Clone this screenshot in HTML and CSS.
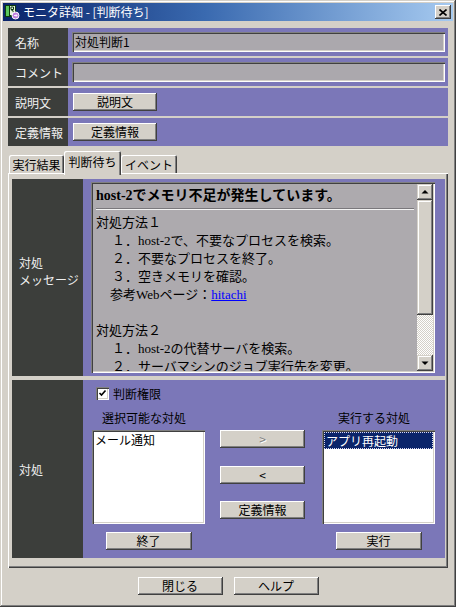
FILE: index.html
```html
<!DOCTYPE html>
<html lang="ja">
<head>
<meta charset="utf-8">
<title>モニタ詳細</title>
<link rel="stylesheet" href="styles.css">
</head>
<body>
<div class="window">
  <div class="titlebar">
    <svg class="app-icon" width="16" height="16" viewBox="0 0 16 16">
      <rect x="1" y="1" width="11" height="12" fill="#0d3d0d"/>
      <rect x="2" y="2" width="3" height="10" fill="#5cc85c"/>
      <rect x="6" y="2" width="5" height="9" fill="#e8f4e0"/>
      <path d="M7 3h2.5v2.5H7zM7 6h1.5l1.5 4" fill="none" stroke="#0d3d0d" stroke-width="1"/>
      <circle cx="11.5" cy="11.5" r="3.5" fill="#c080e0" stroke="#fff" stroke-width="1"/>
      <path d="M10 11.5h3M12 10.3l1 1.2-1 1.2" fill="none" stroke="#fff" stroke-width="0.9"/>
    </svg>
    <span class="title">モニタ詳細 - [判断待ち]</span>
    <button class="close" aria-label="閉じる">
      <svg width="8" height="7" viewBox="0 0 8 7"><path d="M0.5 0.5L7.5 6.5M7.5 0.5L0.5 6.5" stroke="#000" stroke-width="1.6"/></svg>
    </button>
  </div>

  <div class="content">
    <div class="row">
      <div class="lbl">名称</div>
      <div class="val"><div class="field">対処判断1</div></div>
    </div>
    <div class="row">
      <div class="lbl">コメント</div>
      <div class="val"><div class="field"></div></div>
    </div>
    <div class="row">
      <div class="lbl">説明文</div>
      <div class="val val-btn"><button class="btn btn-row">説明文</button></div>
    </div>
    <div class="row">
      <div class="lbl">定義情報</div>
      <div class="val val-btn"><button class="btn btn-row">定義情報</button></div>
    </div>

    <div class="tabs">
      <div class="tab tab-1">実行結果</div>
      <div class="tab tab-2 active">判断待ち</div>
      <div class="tab tab-3">イベント</div>
    </div>

    <div class="panel">
      <div class="sec sec-msg">
        <div class="sec-lbl">対処<br>メッセージ</div>
        <div class="sec-val msg-val">
          <div class="msgbox">
            <div class="msg-text">
              <div class="msg-title">host-2でメモリ不足が発生しています。</div>
              <div class="msg-sep"></div>
              <div class="msg-line">対処方法１</div>
              <div class="msg-line ind">１．host-2で、不要なプロセスを検索。</div>
              <div class="msg-line ind">２．不要なプロセスを終了。</div>
              <div class="msg-line ind">３．空きメモリを確認。</div>
              <div class="msg-line ind2">参考Webページ：<a href="#" class="link">hitachi</a></div>
              <div class="msg-line">&nbsp;</div>
              <div class="msg-line">対処方法２</div>
              <div class="msg-line ind">１．host-2の代替サーバを検索。</div>
              <div class="msg-line ind">２．サーバマシンのジョブ実行先を変更。</div>
            </div>
            <div class="vscroll">
              <div class="sb-btn">
                <svg width="16" height="16" viewBox="0 0 16 16"><path d="M4.5 9.5L8 6l3.5 3.5z" fill="#000"/></svg>
              </div>
              <div class="sb-thumb"></div>
              <div class="sb-track"></div>
              <div class="sb-btn">
                <svg width="16" height="16" viewBox="0 0 16 16"><path d="M4.5 6.5L8 10l3.5-3.5z" fill="#000"/></svg>
              </div>
            </div>
          </div>
        </div>
      </div>

      <div class="sec sec-act">
        <div class="sec-lbl">対処</div>
        <div class="sec-val act-val">
          <label class="chk-row">
            <span class="chk">
              <svg width="9" height="9" viewBox="0 0 9 9"><path d="M1.5 4l2 2 4-4.5" fill="none" stroke="#000" stroke-width="1.6"/></svg>
            </span>
            <span>判断権限</span>
          </label>
          <div class="act-grid">
            <div class="col-title col-title-l">選択可能な対処</div>
            <div></div>
            <div class="col-title col-title-r">実行する対処</div>

            <div class="listbox">
              <div class="item">メール通知</div>
            </div>
            <div class="mid-btns">
              <button class="btn btn-mid disabled">&gt;</button>
              <button class="btn btn-mid">&lt;</button>
              <button class="btn btn-mid">定義情報</button>
            </div>
            <div class="listbox">
              <div class="item selected">アプリ再起動</div>
            </div>

            <div class="under"><button class="btn btn-under">終了</button></div>
            <div></div>
            <div class="under"><button class="btn btn-under">実行</button></div>
          </div>
        </div>
      </div>
    </div>

    <div class="footer">
      <button class="btn btn-foot">閉じる</button>
      <button class="btn btn-foot">ヘルプ</button>
    </div>
  </div>
</div>
</body>
</html>
```

FILE: styles.css
```css
* {
  box-sizing: border-box;
}

html, body {
  margin: 0;
  padding: 0;
  background: #d4d0c8;
  overflow: hidden;
}

body {
  font-family: "Noto Sans CJK JP", "Noto Sans", sans-serif;
  font-size: 12px;
  color: #000;
}

.window {
  width: 456px;
  height: 607px;
  padding: 3px;
  background: #d4d0c8;
  box-shadow:
    inset -1px -1px #404040,
    inset 1px 1px #d4d0c8,
    inset -2px -2px #808080,
    inset 2px 2px #ffffff;
}

/* title bar */
.titlebar {
  height: 18px;
  display: flex;
  align-items: center;
  padding: 0 2px 0 1px;
  background: linear-gradient(90deg, #0a246a 0%, #3a6ab0 45%, #a6caf0 100%);
}

.app-icon {
  flex: none;
  margin-right: 3px;
}

.title {
  color: #fff;
  font-size: 12px;
  line-height: 14px;
  letter-spacing: 0;
  white-space: nowrap;
}

.close {
  margin-left: auto;
  width: 16px;
  height: 14px;
  padding: 0;
  border: 0;
  background: #d4d0c8;
  display: flex;
  align-items: center;
  justify-content: center;
  box-shadow:
    inset -1px -1px #404040,
    inset 1px 1px #fff,
    inset -2px -2px #808080;
}

/* content */
.content {
  padding: 7px 5px 0 5px;
}

.row {
  display: flex;
  height: 28px;
  margin-bottom: 2px;
}

.lbl {
  width: 60px;
  flex: none;
  background: #3c3e3b;
  color: #f0f0f0;
  padding-left: 7px;
  display: flex;
  align-items: center;
  white-space: nowrap;
}

.val {
  flex: 1;
  background: #7b77b8;
  padding: 4px 3px 0 4px;
}

.val-btn {
  padding: 0 0 0 5px;
  display: flex;
  align-items: center;
}

.field {
  height: 20px;
  background: #aba8ad;
  padding: 2px 0 0 3px;
  line-height: 16px;
  box-shadow:
    inset 1px 1px #808080,
    inset 2px 2px #404040,
    inset -1px -1px #fff,
    inset -2px -2px #d4d0c8;
}

/* buttons */
.btn {
  font-family: "Noto Sans CJK JP", "Noto Sans", sans-serif;
  font-size: 12px;
  line-height: 14px;
  color: #000;
  background: #d4d0c8;
  border: 0;
  padding: 0;
  height: 18px;
  box-shadow:
    inset -1px -1px #404040,
    inset 1px 1px #fff,
    inset -2px -2px #808080;
}

.btn-row {
  width: 84px;
}

.btn.disabled {
  color: #808080;
  text-shadow: 1px 1px #fff;
}

/* tabs */
.tabs {
  display: flex;
  align-items: flex-end;
  height: 22px;
  margin-top: 5px;
  padding-left: 1px;
  position: relative;
  z-index: 2;
}

.tab {
  height: 18px;
  display: flex;
  align-items: center;
  justify-content: center;
  background: #d4d0c8;
  border-radius: 2px 2px 0 0;
  box-shadow:
    inset 1px 1px #fff,
    inset -1px 0 #404040,
    inset -2px 0 #808080;
  white-space: nowrap;
}

.tab-1 { width: 55px; }
.tab-2 { width: 57px; }
.tab-3 { width: 56px; }

.tab.active {
  height: 24px;
  margin-bottom: -2px;
  padding-bottom: 4px;
  box-shadow:
    inset 1px 1px #fff,
    inset -1px 0 #404040,
    inset -2px 0 #808080;
}

/* panel */
.panel {
  height: 395px;
  padding: 6px 3px 0 4px;
  background: #d4d0c8;
  box-shadow:
    inset 1px 1px #fff,
    inset -1px -1px #404040,
    inset -2px -2px #808080;
}

.sec {
  display: flex;
}

.sec-msg {
  height: 197px;
  margin-bottom: 4px;
}

.sec-act {
  height: 178px;
}

.sec-lbl {
  width: 71px;
  flex: none;
  background: #3c3e3b;
  color: #f0f0f0;
  padding-left: 7px;
  display: flex;
  align-items: center;
  line-height: 17px;
  padding-bottom: 14px;
}

.sec-act .sec-lbl {
  padding-bottom: 0;
}

.sec-val {
  flex: 1;
  background: #7b77b8;
}

.msg-val {
  padding: 3px 10px 3px 8px;
}

/* message box */
.msgbox {
  height: 100%;
  display: flex;
  background: #adaaae;
  padding: 2px;
  box-shadow:
    inset 1px 1px #808080,
    inset 2px 2px #404040,
    inset -1px -1px #fff,
    inset -2px -2px #d4d0c8;
}

.msg-text {
  flex: 1;
  overflow: hidden;
  padding: 3px 3px 0 3px;
  font-family: "Liberation Serif", "Noto Sans CJK JP", serif;
  color: #000;
}

.msg-title {
  font-size: 14px;
  font-weight: bold;
  line-height: 18px;
  white-space: nowrap;
}

.msg-sep {
  height: 2px;
  margin: 3px 0 4px;
  border-top: 1px solid #7a787c;
  border-bottom: 1px solid #f4f4f4;
}

.msg-line {
  font-size: 13px;
  line-height: 18px;
  white-space: nowrap;
}

.ind {
  padding-left: 16px;
}

.ind2 {
  padding-left: 14px;
}

.link {
  color: #0000ff;
  text-decoration: underline;
}

/* scrollbar */
.vscroll {
  width: 16px;
  flex: none;
  display: flex;
  flex-direction: column;
}

.sb-btn {
  width: 16px;
  height: 16px;
  background: #d4d0c8;
  box-shadow:
    inset -1px -1px #404040,
    inset 1px 1px #d4d0c8,
    inset -2px -2px #808080,
    inset 2px 2px #fff;
}

.sb-btn svg {
  display: block;
}

.sb-thumb {
  height: 115px;
  background: #d4d0c8;
  box-shadow:
    inset -1px -1px #404040,
    inset 1px 1px #d4d0c8,
    inset -2px -2px #808080,
    inset 2px 2px #fff;
}

.sb-track {
  flex: 1;
  background-color: #d4d0c8;
  background-image: repeating-conic-gradient(#ffffff 0 25%, #d4d0c8 0 50%);
  background-size: 2px 2px;
}

/* action section */
.act-val {
  padding: 7px 10px 0 9px;
}

.chk-row {
  display: flex;
  align-items: center;
  height: 13px;
  margin-left: 4px;
  gap: 4px;
  line-height: 13px;
}

.chk {
  width: 13px;
  height: 13px;
  background: #fff;
  display: flex;
  align-items: center;
  justify-content: center;
  box-shadow:
    inset 1px 1px #808080,
    inset 2px 2px #404040,
    inset -1px -1px #fff,
    inset -2px -2px #d4d0c8;
}

.chk svg {
  display: block;
}

.act-grid {
  display: grid;
  grid-template-columns: 113px 1fr 113px;
  grid-template-rows: 14px 94px 18px;
  row-gap: 0;
  margin-top: 11px;
}

.col-title {
  line-height: 14px;
  white-space: nowrap;
}

.col-title-l {
  padding-left: 10px;
}

.col-title-r {
  padding-left: 16px;
}

.listbox {
  margin-top: 5px;
  height: 94px;
  background: #fff;
  padding: 2px;
  box-shadow:
    inset 1px 1px #808080,
    inset 2px 2px #404040,
    inset -1px -1px #fff,
    inset -2px -2px #d4d0c8;
}

.item {
  height: 17px;
  line-height: 15px;
  padding-left: 1px;
  white-space: nowrap;
}

.selected {
  background: #0a246a;
  color: #fff;
  border: 1px dotted #d8d8f0;
}

.mid-btns {
  margin-top: 5px;
  padding-left: 15px;
  padding-right: 17px;
  display: flex;
  flex-direction: column;
  justify-content: space-between;
}

.btn-mid {
  width: 85px;
}

.under {
  margin-top: 13px;
  display: flex;
  justify-content: center;
}

.btn-under {
  width: 86px;
}

/* footer */
.footer {
  display: flex;
  justify-content: center;
  gap: 11px;
  margin-top: 9px;
}

.btn-foot {
  width: 85px;
}
```
